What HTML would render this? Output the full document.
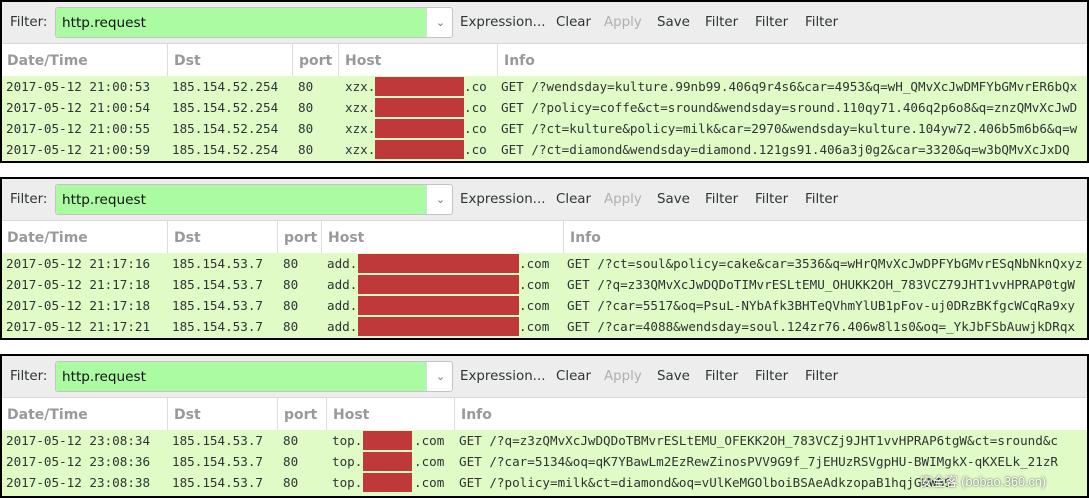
<!DOCTYPE html>
<html><head><meta charset="utf-8"><style>
*{margin:0;padding:0;box-sizing:border-box}
body{width:1089px;height:498px;background:#fff;position:relative;overflow:hidden;font-family:"DejaVu Sans","Liberation Sans",sans-serif}
.p{position:absolute;left:0;width:1089px;border:2px solid #000;overflow:hidden;background:#fff}
.tb{position:absolute;left:0;top:0;right:0;height:42px;background:#ededed;border-bottom:1px solid #d8d8d8}
.tb span{position:absolute;top:13px;font-size:13.4px;color:#2e3436}
.fb{position:absolute;left:53px;top:5px;width:398px;height:31px;border:1px solid #c4c4c4;border-radius:3px;background:#fff;overflow:hidden}
.fb .g{position:absolute;left:0;top:0;bottom:0;width:370px;background:#abfba3}
.fb .t{position:absolute;left:6px;top:7px;font-size:13.6px;color:#111}
.fb .dd{position:absolute;left:370px;top:0;bottom:0;width:28px;border-left:1px solid #ddd;color:#777;font-size:11px;text-align:center;line-height:29px}
.hd{position:absolute;left:0;right:0;top:42px;height:32px;background:#fff}
.hd span{position:absolute;font-size:14px;color:#999;font-weight:bold;padding-left:6px;height:32px;top:0;line-height:34px;border-left:1px solid #ddd}
.rows{position:absolute;left:0;right:0;background:#e0fbc6}
.r{position:relative;height:21px;font-family:"DejaVu Sans Mono","Liberation Mono",monospace;font-size:12.6px;color:#2e3436;white-space:nowrap;line-height:21px}
.r span{position:absolute;top:0}
.red{position:absolute;top:1px;height:19px;background:#c0393a}
</style></head><body>

<!-- panel 1 -->
<div class="p" style="top:0;height:163px">
<div class="tb"><span style="left:8px">Filter:</span>
<div class="fb"><div class="g"></div><div class="t">http.request</div><div class="dd">&#8964;</div></div>
<span style="left:458px">Expression...</span><span style="left:554px">Clear</span><span style="left:602px;color:#b0b0b0">Apply</span><span style="left:655px">Save</span><span style="left:703px">Filter</span><span style="left:753px">Filter</span><span style="left:803px">Filter</span></div>
<div class="hd"><span style="left:-1px;border:none">Date/Time</span><span style="left:165px">Dst</span><span style="left:290px">port</span><span style="left:336px">Host</span><span style="left:495px">Info</span></div>
<div class="rows" style="top:74px;height:85px">
<div class="r"><span style="left:4px">2017-05-12 21:00:53</span><span style="left:170px">185.154.52.254</span><span style="left:296px">80</span><span style="left:343px">xzx.</span><i class="red" style="left:373px;width:89px"></i><span style="left:462px">.co</span><span style="left:499px">GET /?wendsday=kulture.99nb99.406q9r4s6&amp;car=4953&amp;q=wH_QMvXcJwDMFYbGMvrER6bQx</span></div>
<div class="r"><span style="left:4px">2017-05-12 21:00:54</span><span style="left:170px">185.154.52.254</span><span style="left:296px">80</span><span style="left:343px">xzx.</span><i class="red" style="left:373px;width:89px"></i><span style="left:462px">.co</span><span style="left:499px">GET /?policy=coffe&amp;ct=sround&amp;wendsday=sround.110qy71.406q2p6o8&amp;q=znzQMvXcJwD</span></div>
<div class="r"><span style="left:4px">2017-05-12 21:00:55</span><span style="left:170px">185.154.52.254</span><span style="left:296px">80</span><span style="left:343px">xzx.</span><i class="red" style="left:373px;width:89px"></i><span style="left:462px">.co</span><span style="left:499px">GET /?ct=kulture&amp;policy=milk&amp;car=2970&amp;wendsday=kulture.104yw72.406b5m6b6&amp;q=w</span></div>
<div class="r"><span style="left:4px">2017-05-12 21:00:59</span><span style="left:170px">185.154.52.254</span><span style="left:296px">80</span><span style="left:343px">xzx.</span><i class="red" style="left:373px;width:89px"></i><span style="left:462px">.co</span><span style="left:499px">GET /?ct=diamond&amp;wendsday=diamond.121gs91.406a3j0g2&amp;car=3320&amp;q=w3bQMvXcJxDQ</span></div>
</div></div>

<!-- panel 2 -->
<div class="p" style="top:177px;height:163px">
<div class="tb"><span style="left:8px">Filter:</span>
<div class="fb"><div class="g"></div><div class="t">http.request</div><div class="dd">&#8964;</div></div>
<span style="left:458px">Expression...</span><span style="left:554px">Clear</span><span style="left:602px;color:#b0b0b0">Apply</span><span style="left:655px">Save</span><span style="left:703px">Filter</span><span style="left:753px">Filter</span><span style="left:803px">Filter</span></div>
<div class="hd"><span style="left:-1px;border:none">Date/Time</span><span style="left:165px">Dst</span><span style="left:275px">port</span><span style="left:319px">Host</span><span style="left:561px">Info</span></div>
<div class="rows" style="top:74px;height:85px">
<div class="r"><span style="left:4px">2017-05-12 21:17:16</span><span style="left:170px">185.154.53.7</span><span style="left:281px">80</span><span style="left:325px">add.</span><i class="red" style="left:356px;width:161px"></i><span style="left:517px">.com</span><span style="left:565px">GET /?ct=soul&amp;policy=cake&amp;car=3536&amp;q=wHrQMvXcJwDPFYbGMvrESqNbNknQxyz</span></div>
<div class="r"><span style="left:4px">2017-05-12 21:17:18</span><span style="left:170px">185.154.53.7</span><span style="left:281px">80</span><span style="left:325px">add.</span><i class="red" style="left:356px;width:161px"></i><span style="left:517px">.com</span><span style="left:565px">GET /?q=z33QMvXcJwDQDoTIMvrESLtEMU_OHUKK2OH_783VCZ79JHT1vvHPRAP0tgW</span></div>
<div class="r"><span style="left:4px">2017-05-12 21:17:18</span><span style="left:170px">185.154.53.7</span><span style="left:281px">80</span><span style="left:325px">add.</span><i class="red" style="left:356px;width:161px"></i><span style="left:517px">.com</span><span style="left:565px">GET /?car=5517&amp;oq=PsuL-NYbAfk3BHTeQVhmYlUB1pFov-uj0DRzBKfgcWCqRa9xy</span></div>
<div class="r"><span style="left:4px">2017-05-12 21:17:21</span><span style="left:170px">185.154.53.7</span><span style="left:281px">80</span><span style="left:325px">add.</span><i class="red" style="left:356px;width:161px"></i><span style="left:517px">.com</span><span style="left:565px">GET /?car=4088&amp;wendsday=soul.124zr76.406w8l1s0&amp;oq=_YkJbFSbAuwjkDRqx</span></div>
</div></div>

<!-- panel 3 -->
<div class="p" style="top:354px;height:144px">
<div class="tb"><span style="left:8px">Filter:</span>
<div class="fb"><div class="g"></div><div class="t">http.request</div><div class="dd">&#8964;</div></div>
<span style="left:458px">Expression...</span><span style="left:554px">Clear</span><span style="left:602px;color:#b0b0b0">Apply</span><span style="left:655px">Save</span><span style="left:703px">Filter</span><span style="left:753px">Filter</span><span style="left:803px">Filter</span></div>
<div class="hd"><span style="left:-1px;border:none">Date/Time</span><span style="left:165px">Dst</span><span style="left:275px">port</span><span style="left:324px">Host</span><span style="left:452px">Info</span></div>
<div class="rows" style="top:74px;height:66px">
<div class="r"><span style="left:4px">2017-05-12 23:08:34</span><span style="left:170px">185.154.53.7</span><span style="left:281px">80</span><span style="left:330px">top.</span><i class="red" style="left:361px;width:49px"></i><span style="left:412px">.com</span><span style="left:457px">GET /?q=z3zQMvXcJwDQDoTBMvrESLtEMU_OFEKK2OH_783VCZj9JHT1vvHPRAP6tgW&amp;ct=sround&amp;c</span></div>
<div class="r"><span style="left:4px">2017-05-12 23:08:36</span><span style="left:170px">185.154.53.7</span><span style="left:281px">80</span><span style="left:330px">top.</span><i class="red" style="left:361px;width:49px"></i><span style="left:412px">.com</span><span style="left:457px">GET /?car=5134&amp;oq=qK7YBawLm2EzRewZinosPVV9G9f_7jEHUzRSVgpHU-BWIMgkX-qKXELk_21zR</span></div>
<div class="r"><span style="left:4px">2017-05-12 23:08:38</span><span style="left:170px">185.154.53.7</span><span style="left:281px">80</span><span style="left:330px">top.</span><i class="red" style="left:361px;width:49px"></i><span style="left:412px">.com</span><span style="left:457px">GET /?policy=milk&amp;ct=diamond&amp;oq=vUlKeMGOlboiBSAeAdkzopaB1hqjGWWB9</span><span style="left:918px;font-family:'Liberation Sans','Noto Sans CJK SC',sans-serif;color:#fff;text-shadow:0 0 2px #333">安全客 (bobao.360.cn)</span></div>
</div></div>
</body></html>
